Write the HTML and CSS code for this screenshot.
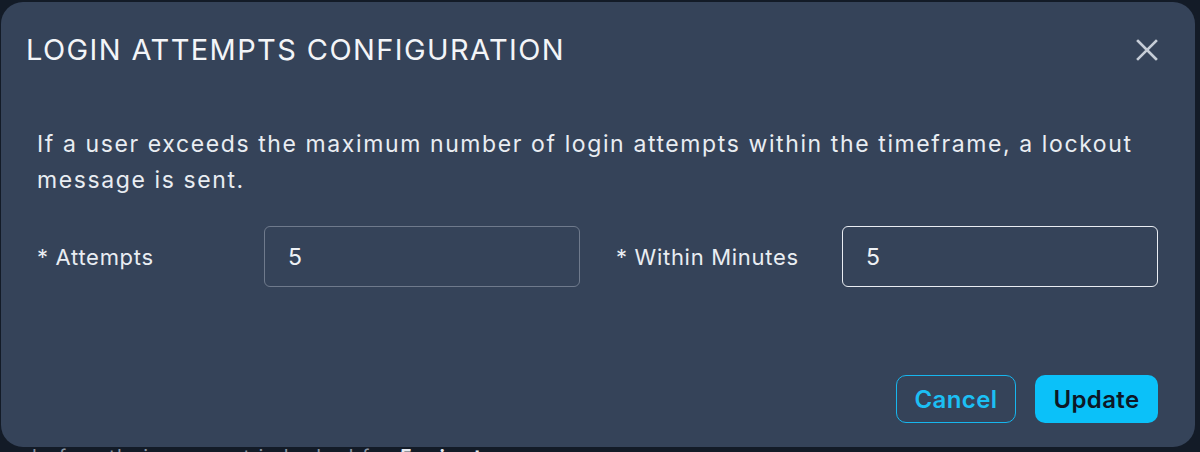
FILE: index.html
```html
<!DOCTYPE html>
<html lang="en">
<head>
  <meta charset="UTF-8" />
  <meta name="viewport" content="width=device-width, initial-scale=1.0" />
  <title>Login Attempts Configuration</title>
  <link rel="stylesheet" href="styles.css">
</head>
<body>
  <main class="page">
    <p class="page-note">es before their account is locked for <strong>5 minutes</strong>.</p>
  </main>

  <div class="overlay">
    <div class="modal">
      <header class="modal-head">
        <h2>LOGIN ATTEMPTS CONFIGURATION</h2>
        <button class="close" aria-label="Close">
          <svg width="22" height="22" viewBox="0 0 22 22">
            <path d="M2 2 L20 20 M20 2 L2 20" stroke="#c6cdd7" stroke-width="2.6" stroke-linecap="square" fill="none" />
          </svg>
        </button>
      </header>

      <p class="modal-desc">If a user exceeds the maximum number of login attempts within the timeframe, a lockout message is sent.</p>

      <div class="fields">
        <label for="attempts">* Attempts</label>
        <input type="text" id="attempts" value="5" />
        <label for="minutes">* Within Minutes</label>
        <input type="text" id="minutes" class="focused" value="5" />
      </div>

      <footer class="modal-actions">
        <button class="btn btn-outline">Cancel</button>
        <button class="btn btn-primary">Update</button>
      </footer>
    </div>
  </div>
</body>
</html>
```

FILE: styles.css
```css
body {
  margin: 0;
  background: #131b27;
  color: #eef1f5;
  font-family: Inter, "Noto Sans", sans-serif;
  overflow: hidden;
  height: 452px;
}
.page { padding-top: 445px; }
.page-note {
  margin: 0;
  font-size: 20px;
  line-height: 24px;
  color: #8a94a3;
  letter-spacing: 1.4px;
  white-space: nowrap;
}
.page-note strong { color: #e6e9ee; }

.overlay {
  position: fixed;
  top: 2px;
  left: 1px;
}
.modal {
  width: 1194px;
  height: 445px;
  box-sizing: border-box;
  padding: 32px 37px 24px 36px;
  background: #354359;
  border-radius: 22px;
  display: flex;
  flex-direction: column;
}
.modal-head {
  display: flex;
  justify-content: space-between;
  align-items: center;
}
.modal-head h2 {
  margin: 0 0 0 -11px;
  font-size: 29px;
  line-height: 32px;
  font-weight: 400;
  letter-spacing: 1.4px;
  color: #f3f5f8;
}
.close {
  background: none;
  border: none;
  padding: 0;
  width: 22px;
  height: 22px;
  display: flex;
}
.modal-desc {
  margin: 60px 0 0;
  font-size: 23px;
  line-height: 36px;
  letter-spacing: 1.6px;
  color: #e9edf2;
}
.fields {
  margin-top: 28px;
  display: grid;
  grid-template-columns: 227px 316px 1fr 316px;
  align-items: center;
}
.fields label {
  font-size: 22px;
  letter-spacing: 0.7px;
  color: #e9edf2;
}
.fields label[for="minutes"] { padding-left: 36px; }
.fields input {
  height: 61px;
  box-sizing: border-box;
  padding: 0 23px;
  background: transparent;
  border: 1.5px solid #6f7a8c;
  border-radius: 6px;
  color: #eef1f5;
  font-family: inherit;
  font-size: 23px;
  outline: none;
}
.fields input.focused { border-color: #e9edf2; }

.modal-actions {
  margin-top: auto;
  display: flex;
  justify-content: flex-end;
  gap: 19px;
}
.btn {
  height: 48px;
  border-radius: 10px;
  font-family: inherit;
  font-size: 24px;
  font-weight: 600;
  letter-spacing: 0.4px;
  padding: 0;
}
.btn-outline {
  width: 120px;
  background: transparent;
  border: 1.5px solid #17b6ee;
  color: #1cbff4;
}
.btn-primary {
  width: 123px;
  background: #0bc1f9;
  border: none;
  color: #0d1727;
}
```
